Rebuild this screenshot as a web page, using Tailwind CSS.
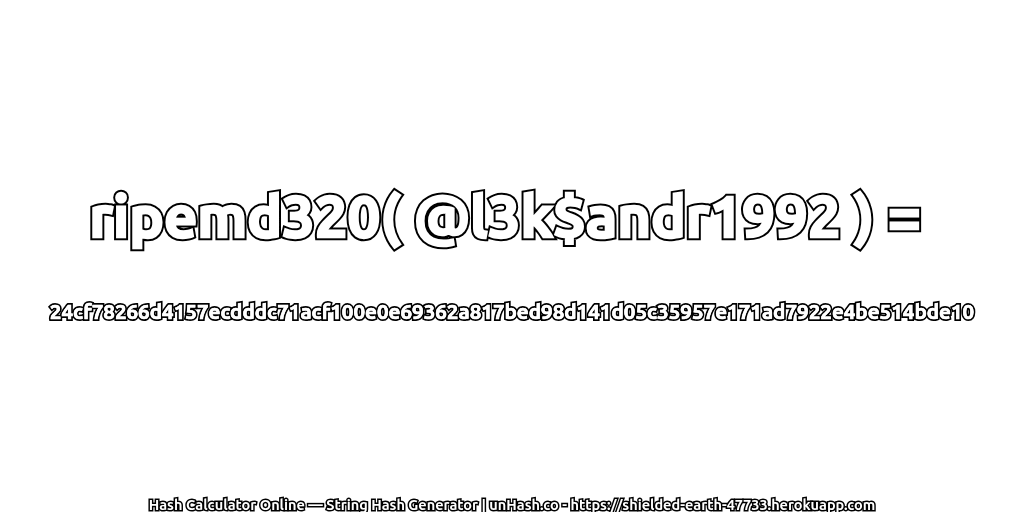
<!DOCTYPE html>
<html lang="en">
<head>
<meta charset="UTF-8">
<title>ripemd320</title>
<script src="https://cdn.jsdelivr.net/npm/@tailwindcss/browser@4"></script>
</head>
<body class="bg-white">
<div class="w-[1024px] h-[512px] overflow-hidden flex flex-col items-center font-['Ubuntu','Noto_Sans','DejaVu_Sans',sans-serif] text-white font-bold [paint-order:stroke_fill] whitespace-nowrap will-change-transform">
  <h1 data-t="ripemd320( @l3k$andr1992 ) =" class="relative mt-[184px] mr-[14px] text-[58px] leading-[64px] [-webkit-text-stroke:6.5px_#000] after:absolute after:inset-0 after:content-[attr(data-t)] after:[-webkit-text-stroke:2.5px_#fff]">ripemd320( @l3k$andr1992 ) =</h1>
  <p data-t="24cf78266d4157ecdddc71acf100e0e69362a817bed98d141d05c35957e171ad7922e4be514bde10" class="relative mt-[50px] text-[20.6px] leading-[28px] [-webkit-text-stroke:4px_#000] after:absolute after:inset-0 after:content-[attr(data-t)] after:[-webkit-text-stroke:0.6px_#fff]">24cf78266d4157ecdddc71acf100e0e69362a817bed98d141d05c35957e171ad7922e4be514bde10</p>
  <p class="mt-[169px] text-[14.5px] leading-[20px] [-webkit-text-stroke:3px_#000]">Hash Calculator Online — String Hash Generator | unHash.co - https://shielded-earth-47733.herokuapp.com</p>
</div>
</body>
</html>
